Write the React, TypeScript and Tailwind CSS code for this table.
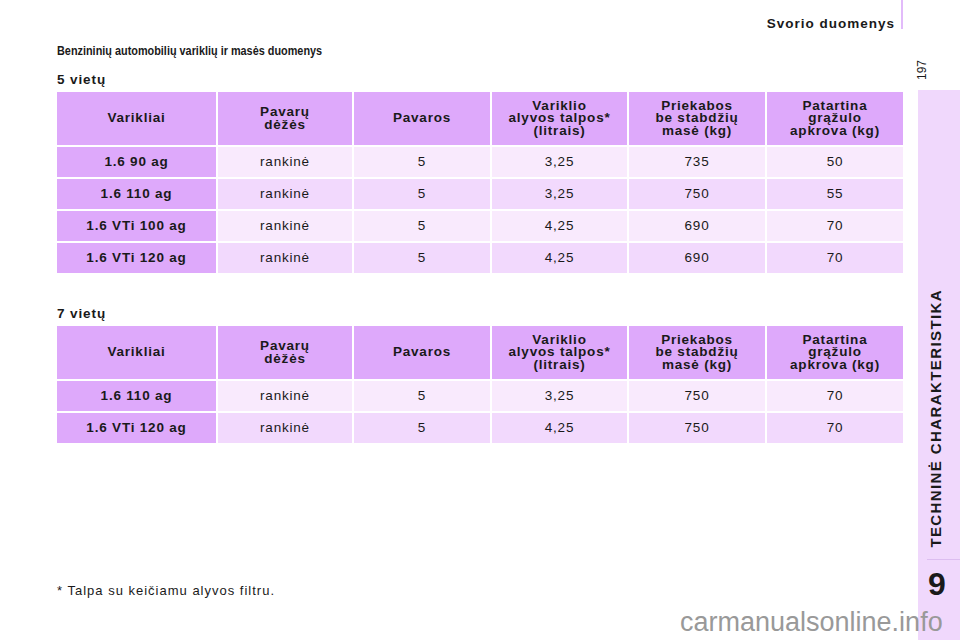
const headers = [
  ["Varikliai"],
  ["Pavarų", "dėžės"],
  ["Pavaros"],
  ["Variklio", "alyvos talpos*", "(litrais)"],
  ["Priekabos", "be stabdžių", "masė (kg)"],
  ["Patartina", "grąžulo", "apkrova (kg)"],
];

const fiveSeats = [
  ["1.6 90 ag", "rankinė", "5", "3,25", "735", "50"],
  ["1.6 110 ag", "rankinė", "5", "3,25", "750", "55"],
  ["1.6 VTi 100 ag", "rankinė", "5", "4,25", "690", "70"],
  ["1.6 VTi 120 ag", "rankinė", "5", "4,25", "690", "70"],
];

const sevenSeats = [
  ["1.6 110 ag", "rankinė", "5", "3,25", "750", "70"],
  ["1.6 VTi 120 ag", "rankinė", "5", "4,25", "750", "70"],
];

const DataTable = ({ rows }: { rows: string[][] }) => (
  <div className="grid grid-cols-[159px_134px_136px_135px_136px_136px] gap-[2px] tracking-[0.8px] text-[13.5px]">
    {headers.map((lines, i) => (
      <div
        key={i}
        className="h-[53px] bg-[#dea9fb] flex flex-col items-center justify-center font-bold leading-[12.5px] text-center"
      >
        {lines.map((l) => (
          <span key={l}>{l}</span>
        ))}
      </div>
    ))}
    {rows.map((row, r) =>
      row.map((cell, c) => (
        <div
          key={`${r}-${c}`}
          className={`h-[30px] flex items-center justify-center ${
            c === 0
              ? "bg-[#dea9fb] font-bold"
              : r % 2 === 0
              ? "bg-[#f9eafd]"
              : "bg-[#f2d9fd]"
          }`}
        >
          {cell}
        </div>
      ))
    )}
  </div>
);

export default function App() {
  return (
    <div className="relative w-[960px] h-[640px] bg-white flex overflow-hidden font-['Liberation_Sans',Arial,sans-serif] text-[#1a1a1a]">
      {/* Page content */}
      <main className="w-[903px] pl-[57px] flex flex-col">
        <header className="h-[29px] flex justify-end">
          <span className="mt-[16px] mr-[6px] text-[13.5px] leading-[15px] font-bold tracking-[1px]">
            Svorio duomenys
          </span>
          <span className="w-[2px] h-[29px] bg-[#e2bbfa]" />
        </header>

        <h1 className="mt-[14px] self-start origin-left scale-x-[0.836] text-[13px] leading-[16px] font-bold">
          Benzininių automobilių variklių ir masės duomenys
        </h1>

        <h2 className="mt-[13px] text-[13.5px] leading-[16px] font-bold tracking-[0.9px]">5 vietų</h2>
        <div className="mt-[4px]">
          <DataTable rows={fiveSeats} />
        </div>

        <h2 className="mt-[33px] text-[13.5px] leading-[16px] font-bold tracking-[0.9px]">7 vietų</h2>
        <div className="mt-[4px]">
          <DataTable rows={sevenSeats} />
        </div>

        <p className="mt-[140px] text-[13px] leading-[16px] tracking-[1px]">
          * Talpa su keičiamu alyvos filtru.
        </p>
      </main>

      {/* Chapter sidebar */}
      <aside className="ml-[15px] w-[42px] flex flex-col">
        <div className="h-[90px] flex flex-col">
          <span className="self-start -ml-[3px] mt-[60px] [writing-mode:vertical-rl] rotate-180 text-[12px] leading-[14px]">
            197
          </span>
        </div>
        <div className="flex-1 bg-[#f0d8fc] flex flex-col">
          <div className="h-[469px] flex flex-col justify-end pb-[11px] pl-[9px]">
            <span className="self-start [writing-mode:vertical-rl] rotate-180 text-[15px] leading-[18px] font-bold tracking-[1.4px]">
              TECHNINĖ CHARAKTERISTIKA
            </span>
          </div>
          <div className="ml-[9px] h-px bg-[#dcbdf0]" />
          <div className="pl-[10px] pt-[8px] text-[32px] leading-[32px] font-bold">9</div>
        </div>
      </aside>

      <div className="absolute left-[680px] top-[609px] text-[27px] leading-[27px] text-[#999999]">
        carmanualsonline.info
      </div>
    </div>
  );
}
